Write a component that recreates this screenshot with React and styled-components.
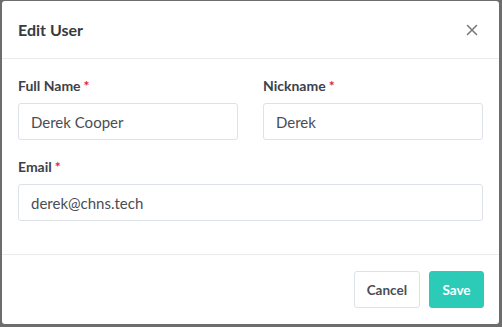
import React from "react";
import styled, { createGlobalStyle } from "styled-components";

const Global = createGlobalStyle`
  html, body { margin: 0; padding: 0; background: #6d6d6d; }
  body { font-family: "Lato", "Open Sans", sans-serif; }
  * { box-sizing: border-box; }
`;

const Backdrop = styled.div`
  width: 502px;
  height: 327px;
  padding: 1px 3px 3px 2px;
  background: #6d6d6d;
`;

const Modal = styled.div`
  width: 497px;
  height: 323px;
  background: #fff;
  border-radius: 3px;
  display: flex;
  flex-direction: column;
  overflow: hidden;
`;

const Header = styled.div`
  height: 58px;
  flex-shrink: 0;
  display: flex;
  align-items: center;
  justify-content: space-between;
  padding: 0 21px 0 16px;
  border-bottom: 1px solid #ebebeb;
`;

const Title = styled.h2`
  margin: 0;
  font-size: 16px;
  font-weight: 700;
  color: #363a42;
`;

const Close = styled.button`
  border: 0;
  background: none;
  padding: 0;
  width: 12px;
  height: 12px;
  display: flex;
  cursor: pointer;
`;

const Body = styled.div`
  padding: 17px 16px 33px;
  display: flex;
  flex-direction: column;
  border-bottom: 1px solid #ebebeb;
`;

const Row = styled.div`
  display: grid;
  grid-template-columns: ${p => p.$cols || "1fr"};
  column-gap: 25px;
  margin-bottom: ${p => (p.$last ? "0" : "17px")};
`;

const Field = styled.div`
  display: flex;
  flex-direction: column;
`;

const Label = styled.label`
  font-size: 14px;
  line-height: 20px;
  font-weight: 700;
  color: #3d4149;
  margin-bottom: 7px;
`;

const Star = styled.span`
  color: #e0242b;
  margin-left: 3px;
`;

const Input = styled.input`
  height: 37px;
  border: 1px solid #dde2e8;
  border-radius: 3px;
  padding: 0 12px;
  font-family: "Lato", "Open Sans", sans-serif;
  font-size: 15px;
  color: #4a4d55;
  outline: none;
  width: 100%;
`;

const Footer = styled.div`
  flex: 1;
  display: flex;
  justify-content: flex-end;
  align-items: flex-start;
  gap: 9px;
  padding: 16px 15px 0 16px;
`;

const Button = styled.button`
  height: 37px;
  min-width: ${p => (p.$primary ? "55px" : "65px")};
  padding: 0 12px;
  border-radius: 3px;
  font-family: "Lato", "Open Sans", sans-serif;
  font-weight: 700;
  font-size: 13.5px;
  cursor: pointer;
  border: 1px solid ${p => (p.$primary ? "#2ccbb8" : "#dde2e8")};
  background: ${p => (p.$primary ? "#2ccbb8" : "#fff")};
  color: ${p => (p.$primary ? "#fff" : "#4a4d55")};
`;

export default function App() {
  return (
    <>
      <Global />
      <Backdrop>
        <Modal>
          <Header>
            <Title>Edit User</Title>
            <Close aria-label="Close">
              <svg width="12" height="12" viewBox="0 0 12 12">
                <path d="M1.5 1.5L10.5 10.5M10.5 1.5L1.5 10.5" stroke="#7a7a7a" strokeWidth="1.6" strokeLinecap="round" />
              </svg>
            </Close>
          </Header>
          <Body>
            <Row $cols="1fr 1fr">
              <Field>
                <Label>Full Name<Star>*</Star></Label>
                <Input defaultValue="Derek Cooper" />
              </Field>
              <Field>
                <Label>Nickname<Star>*</Star></Label>
                <Input defaultValue="Derek" />
              </Field>
            </Row>
            <Row $last>
              <Field>
                <Label>Email<Star>*</Star></Label>
                <Input defaultValue="derek@chns.tech" />
              </Field>
            </Row>
          </Body>
          <Footer>
            <Button>Cancel</Button>
            <Button $primary>Save</Button>
          </Footer>
        </Modal>
      </Backdrop>
    </>
  );
}
